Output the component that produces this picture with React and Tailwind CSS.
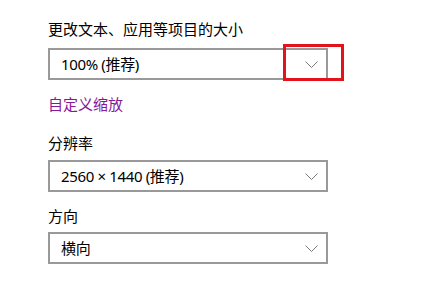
import React from "react";

function Chevron() {
  return (
    <svg width="13" height="7" viewBox="0 0 13 7" className="shrink-0">
      <path d="M0.5 0.5 L6.5 6.5 L12.5 0.5" fill="none" stroke="#7a7a7a" strokeWidth="1" />
    </svg>
  );
}

function Select({ text, className }) {
  return (
    <div
      className={
        "flex h-[32px] w-[280px] items-center justify-between border-2 border-[#999999] bg-white pl-[11px] pr-[8px] " +
        (className || "")
      }
    >
      <span className="leading-[20px] tracking-[-0.35px]">{text}</span>
      <Chevron />
    </div>
  );
}

export default function App() {
  return (
    <div
      className="relative h-[291px] w-[426px] overflow-hidden bg-white text-[15px] text-black"
      style={{ fontFamily: '"Segoe UI", "Noto Sans", "Noto Sans CJK SC", sans-serif' }}
    >
      <div className="flex flex-col items-start pl-[48px] pt-[19px]">
        <div className="h-[20px] leading-[20px]">更改文本、应用等项目的大小</div>
        <Select className="mt-[9px]" text="100% (推荐)" />
        <div className="mt-[14px] h-[20px] leading-[20px] text-[#881798]">自定义缩放</div>
        <div className="mt-[19px] h-[20px] leading-[20px]">分辨率</div>
        <Select className="mt-[7px]" text="2560 × 1440 (推荐)" />
        <div className="mt-[14px] h-[20px] leading-[20px]">方向</div>
        <Select className="mt-[6px]" text="横向" />
      </div>
      <div className="absolute left-[283px] top-[44px] h-[37px] w-[61px] border-[3px] border-[#e3131b]" />
    </div>
  );
}
